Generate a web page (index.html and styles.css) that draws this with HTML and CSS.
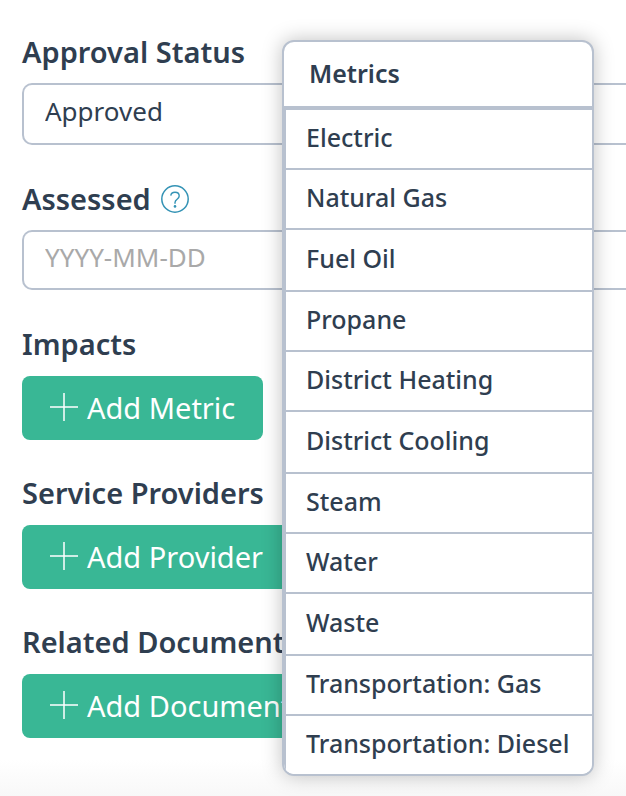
FILE: index.html
```html
<!DOCTYPE html>
<html lang="en">
<head>
<meta charset="utf-8">
<meta name="viewport" content="width=device-width, initial-scale=1">
<title>Project details</title>
<link rel="stylesheet" href="styles.css">
</head>
<body>
<svg class="sprite" aria-hidden="true">
  <symbol id="plus" viewBox="0 0 28 28"><path d="M14 0v28M0 14h28" fill="none" stroke="currentColor" stroke-width="1.5"/></symbol>
</svg>
<main class="page">
  <form class="form">
    <div class="field">
      <label class="label" for="status">Approval Status</label>
      <select class="control control-select" id="status"><option>Approved</option></select>
    </div>
    <div class="field">
      <div class="label-row">
        <label class="label" for="assessed">Assessed</label>
        <button class="help" type="button" aria-label="Help">
          <svg viewBox="0 0 28 28" width="28" height="28" fill="none" stroke="currentColor" aria-hidden="true">
            <circle cx="14" cy="14" r="13.2" stroke-width="1.5"/>
            <path d="M9.8 10.6C10 8.5 11.700 7.300 14 7.300c2.400 0 4.200 1.400 4.200 3.600 0 3.400-4.200 3.200-4.200 6.600v1.300" stroke-width="1.4"/>
            <circle cx="14" cy="21.400" r="1.300" fill="currentColor" stroke="none"/>
          </svg>
        </button>
      </div>
      <input class="control" id="assessed" type="text" placeholder="YYYY-MM-DD">
    </div>
    <div class="actions">
      <section class="action">
        <h2 class="label">Impacts</h2>
        <button class="add" type="button"><svg class="plus"><use href="#plus"/></svg>Add Metric</button>
      </section>
      <section class="action">
        <h2 class="label">Service Providers</h2>
        <button class="add" type="button"><svg class="plus"><use href="#plus"/></svg>Add Provider</button>
      </section>
      <section class="action">
        <h2 class="label">Related Documents</h2>
        <button class="add" type="button"><svg class="plus"><use href="#plus"/></svg>Add Document</button>
      </section>
    </div>
  </form>
  <div class="menu">
    <h3 class="menu-title">Metrics</h3>
    <ul class="menu-list">
      <li><button class="menu-item" type="button">Electric</button></li>
      <li><button class="menu-item" type="button">Natural Gas</button></li>
      <li><button class="menu-item" type="button">Fuel Oil</button></li>
      <li><button class="menu-item" type="button">Propane</button></li>
      <li><button class="menu-item" type="button">District Heating</button></li>
      <li><button class="menu-item" type="button">District Cooling</button></li>
      <li><button class="menu-item" type="button">Steam</button></li>
      <li><button class="menu-item" type="button">Water</button></li>
      <li><button class="menu-item" type="button">Waste</button></li>
      <li><button class="menu-item" type="button">Transportation: Gas</button></li>
      <li><button class="menu-item" type="button">Transportation: Diesel</button></li>
    </ul>
  </div>
</main>
</body>
</html>
```
FILE: styles.css
```css
* { box-sizing: border-box; }

:root {
  --ink: #2f3e50;
  --line: #b8c1cf;
  --green: #39b795;
}

body {
  margin: 0;
  color: var(--ink);
  background: #fff;
  font-family: "Noto Sans", "Open Sans", sans-serif;
}

button, input, select { font: inherit; color: inherit; }
h2, h3, ul { margin: 0; padding: 0; }
ul { list-style: none; }
.sprite { display: none; }

.page {
  position: relative;
  min-height: 100vh;
  background: linear-gradient(to top, #f8f8f8, #fff 36px);
}

.form {
  display: flex;
  flex-direction: column;
  gap: 36px;
  padding: 34px 0 56px 22px;
}

.field { display: flex; flex-direction: column; gap: 13px; }
.label-row { display: flex; align-items: center; gap: 10px; }
.label { font-size: 29px; line-height: 36px; font-weight: 600; }

.help {
  display: flex;
  padding: 0;
  border: 0;
  background: none;
  color: #3493b5;
}

.control {
  width: 100%;
  height: 60px;
  padding: 0 20px 6px 21px;
  border: 2px solid var(--line);
  border-right: 0;
  border-radius: 10px 0 0 10px;
  background: #fff;
  font-size: 26px;
  appearance: none;
}
.control-select { height: 62px; }
.control::placeholder { color: #a9a9a9; opacity: 1; }

.actions { display: flex; flex-direction: column; gap: 35px; }
.action {
  display: flex;
  flex-direction: column;
  align-items: flex-start;
  gap: 14px;
}

.add {
  display: flex;
  align-items: center;
  gap: 9px;
  height: 64px;
  padding: 0 28px 2px;
  border: 0;
  border-radius: 8px;
  background: var(--green);
  color: #fff;
  font-size: 29px;
  font-weight: 400;
}
.plus { width: 28px; height: 28px; }

.menu {
  position: absolute;
  top: 40px;
  left: 282px;
  width: 312px;
  border: 2px solid var(--line);
  border-radius: 12px;
  background: #fff;
  box-shadow: 0 0 20px rgba(0, 0, 0, 0.25);
  overflow: hidden;
}
.menu-title {
  padding: 0 25px 2px;
  font-size: 25px;
  line-height: 62px;
  font-weight: 600;
}
.menu-list {
  border-top: 4px solid var(--line);
  border-left: 2px solid var(--line);
}
.menu-item {
  display: block;
  width: 100%;
  height: 60px;
  padding: 0 20px 4px;
  border: 0;
  border-bottom: 2px solid var(--line);
  background: #fff;
  font-size: 25px;
  font-weight: 500;
  text-align: left;
  white-space: nowrap;
}
li:nth-child(3n) .menu-item { height: 62px; }
li:last-child .menu-item { height: 58px; border-bottom: 0; }
```
